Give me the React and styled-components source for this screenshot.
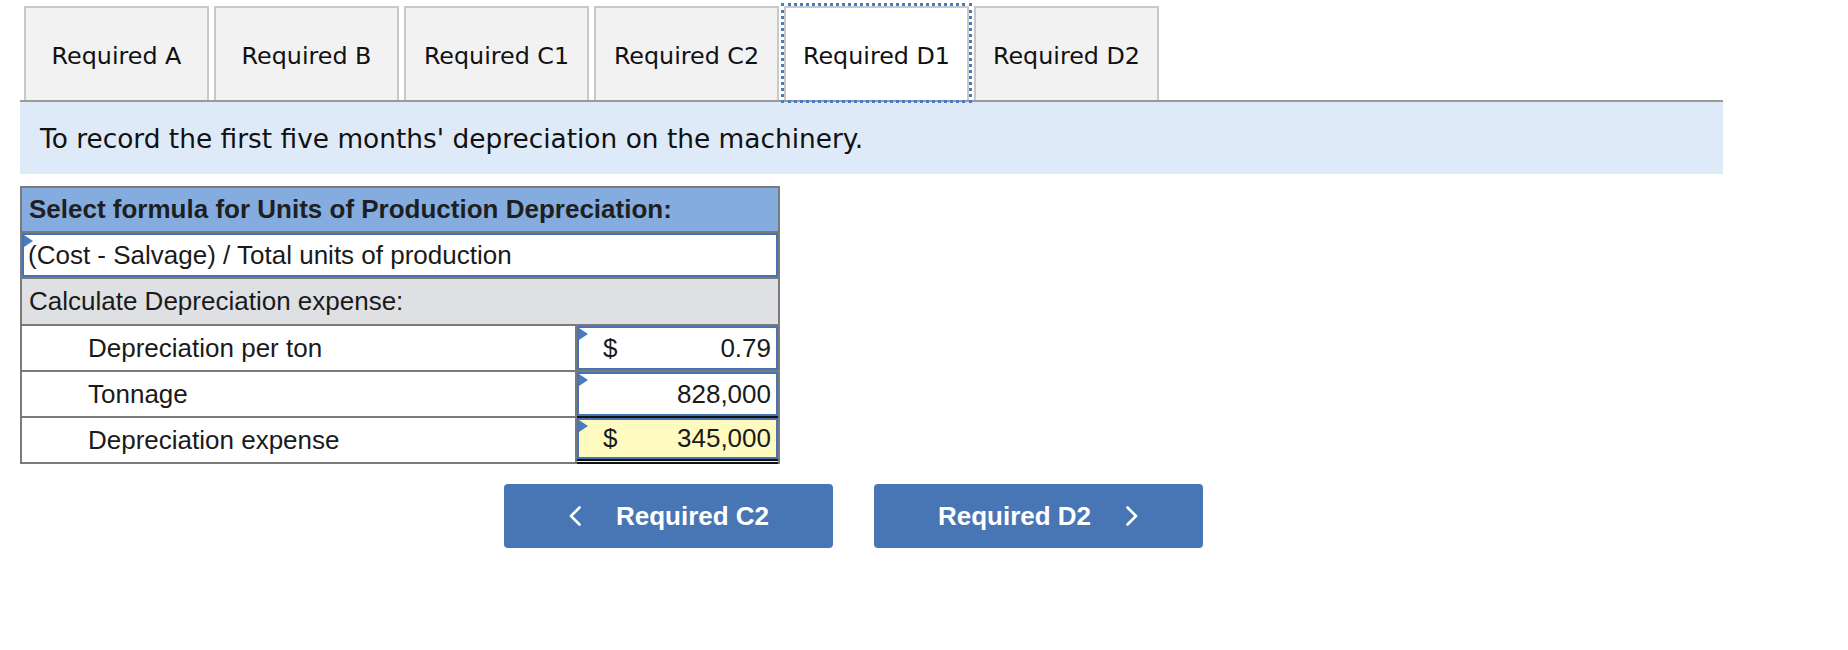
import React, { useState } from 'react'
import styled, { createGlobalStyle } from 'styled-components';

const GlobalStyle = createGlobalStyle`
  body {
    margin: 0;
    background: #ffffff;
    font-family: "Liberation Sans", Arial, sans-serif;
    color: #1a1a1a;
  }
`;

const Page = styled.div`
  width: 1703px;
  padding: 6px 0 0 20px;
`;

const TabBar = styled.div`
  display: flex;
  gap: 5px;
  padding-left: 4px;
  border-bottom: 2px solid #9a9a9a;
`;

const Tab = styled.div`
  position: relative;
  box-sizing: border-box;
  width: 185px;
  height: 94px;
  display: flex;
  align-items: center;
  justify-content: center;
  padding-top: 3px;
  border: 2px solid #c8c8c8;
  border-bottom: none;
  background: ${p => (p.$active ? '#ffffff' : '#f2f2f2')};
  outline: ${p => (p.$active ? '3px dotted #4a7bc0' : 'none')};
  font-family: "DejaVu Sans", Verdana, sans-serif;
  font-size: 23.8px;
  color: #111;
  cursor: pointer;
`;

const Banner = styled.div`
  height: 72px;
  display: flex;
  align-items: center;
  padding-left: 20px;
  background: #deeaf7;
  font-family: "DejaVu Sans", Verdana, sans-serif;
  font-size: 26.4px;
  color: #111;
`;

const Sheet = styled.div`
  box-sizing: border-box;
  width: 760px;
  margin-top: 12px;
  border: 2px solid #7a7a7a;
  border-bottom: none;
  font-size: 26px;
`;

const HeadRow = styled.div`
  height: 43px;
  display: flex;
  align-items: center;
  padding-left: 7px;
  background: #84acdf;
  border-bottom: 2px solid #7a7a7a;
  font-weight: bold;
  color: #1f1f1f;
`;

const FormulaRow = styled.div`
  height: 44px;
  border-bottom: 2px solid #7a7a7a;
`;

const BlueBox = styled.div`
  position: relative;
  box-sizing: border-box;
  height: 100%;
  display: flex;
  align-items: center;
  border: 2px solid #4773b4;
  background: ${p => p.$bg || '#ffffff'};
  padding: 0 5px 0 4px;
`;

const Marker = styled.span`
  position: absolute;
  top: 0;
  left: 0;
  width: 0;
  height: 0;
  border-left: 9px solid #4a7bc0;
  border-top: 6px solid transparent;
  border-bottom: 6px solid transparent;
`;

const SubRow = styled.div`
  height: 45px;
  display: flex;
  align-items: center;
  padding-left: 7px;
  background: #dfe0e4;
  border-bottom: 2px solid #7a7a7a;
`;

const DataRow = styled.div`
  display: grid;
  grid-template-columns: 1fr 201px;
  height: 46px;
`;

const Label = styled.div`
  box-sizing: border-box;
  display: flex;
  align-items: center;
  padding-left: 66px;
  border-right: 2px solid #7a7a7a;
  border-bottom: 2px solid #7a7a7a;
`;

const Entry = styled.div`
  box-sizing: border-box;
  border-bottom: ${p => p.$rule || '2px solid #7a7a7a'};
  background: ${p => p.$bg || 'transparent'};
`;

const Dollar = styled.span`
  padding-left: 20px;
`;

const Amount = styled.span`
  margin-left: auto;
`;

const NavRow = styled.div`
  display: flex;
  gap: 41px;
  margin-top: 20px;
  padding-left: 484px;
`;

const NavButton = styled.button`
  box-sizing: border-box;
  width: 329px;
  height: 64px;
  display: flex;
  align-items: center;
  justify-content: center;
  gap: 34px;
  border: none;
  border-radius: 4px;
  background: #4876b4;
  color: #ffffff;
  font-family: "Liberation Sans", Arial, sans-serif;
  font-size: 26px;
  font-weight: bold;
  cursor: pointer;
  svg {
    display: block;
  }
`;

const Chevron = ({ dir }) => (
  <svg width="14" height="22" viewBox="0 0 14 22" fill="none" stroke="#ffffff" strokeWidth="2.6" strokeLinecap="round" strokeLinejoin="round">
    {dir === 'left'
      ? <polyline points="11.5,2.5 3,11 11.5,19.5" />
      : <polyline points="2.5,2.5 11,11 2.5,19.5" />}
  </svg>
);

const tabs = ['Required A', 'Required B', 'Required C1', 'Required C2', 'Required D1', 'Required D2'];

const rows = [
  { label: 'Depreciation per ton', dollar: true, value: '0.79' },
  { label: 'Tonnage', dollar: false, value: '828,000', rule: '2px solid #111' },
  { label: 'Depreciation expense', dollar: true, value: '345,000', total: true },
];

function App() {
  const [active, setActive] = useState('Required D1');

  return (
    <Page>
      <GlobalStyle />
      <TabBar>
        {tabs.map(t => (
          <Tab key={t} $active={t === active} onClick={() => setActive(t)}>{t}</Tab>
        ))}
      </TabBar>
      <Banner>To record the first five months' depreciation on the machinery.</Banner>

      <Sheet>
        <HeadRow>Select formula for Units of Production Depreciation:</HeadRow>
        <FormulaRow>
          <BlueBox>
            <Marker />
            (Cost - Salvage) / Total units of production
          </BlueBox>
        </FormulaRow>
        <SubRow>Calculate Depreciation expense:</SubRow>
        {rows.map(r => (
          <DataRow key={r.label}>
            <Label>{r.label}</Label>
            <Entry
              $rule={r.total ? '5px double #111' : r.rule}
              $bg={r.total ? '#fffbc0' : null}
            >
              <BlueBox $bg={r.total ? '#fffbc0' : null}>
                <Marker />
                {r.dollar ? <Dollar>$</Dollar> : null}
                <Amount>{r.value}</Amount>
              </BlueBox>
            </Entry>
          </DataRow>
        ))}
      </Sheet>

      <NavRow>
        <NavButton><Chevron dir="left" />Required C2</NavButton>
        <NavButton>Required D2<Chevron dir="right" /></NavButton>
      </NavRow>
    </Page>
  )
}

export default App;
